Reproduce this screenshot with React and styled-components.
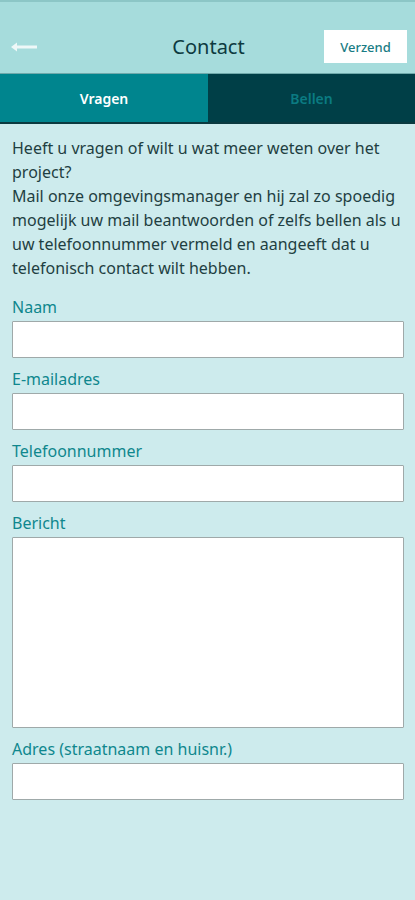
import React from "react";
import styled, { createGlobalStyle } from "styled-components";

const Global = createGlobalStyle`
  html, body { margin: 0; padding: 0; background: #cdebed; }
  body { font-family: "Noto Sans", "Open Sans", sans-serif; }
  * { box-sizing: border-box; }
`;

const Page = styled.div`
  width: 415px;
  min-height: 900px;
  background: #cdebed;
  display: flex;
  flex-direction: column;
`;

const Header = styled.header`
  height: 74px;
  background: #a6dcdc;
  border-top: 2px solid #8cc6c6;
  border-bottom: 1px solid #6fa9ab;
  display: grid;
  grid-template-columns: 1fr auto 1fr;
  align-items: center;
  padding: 24px 8px 6px 10px;
`;

const Back = styled.button`
  background: none;
  border: none;
  padding: 0;
  width: 28px;
  height: 20px;
  display: flex;
  align-items: center;
  justify-self: start;
`;

const Title = styled.h1`
  margin: 0;
  font-size: 20px;
  font-weight: 400;
  color: #0d3a40;
  letter-spacing: 0;
`;

const SendButton = styled.button`
  justify-self: end;
  width: 83px;
  height: 33px;
  background: #fff;
  border: none;
  color: #197c84;
  font-family: inherit;
  font-size: 13px;
  font-weight: 500;
`;

const Tabs = styled.nav`
  display: grid;
  grid-template-columns: 208px 207px;
  height: 50px;
  border-bottom: 2px solid #0b3a40;
`;

const Tab = styled.div`
  display: flex;
  align-items: center;
  justify-content: center;
  font-size: 14px;
  font-weight: 600;
  background: ${(p) => (p.$active ? "#00858e" : "#003f47")};
  color: ${(p) => (p.$active ? "#ffffff" : "#0b7b82")};
`;

const Content = styled.main`
  padding: 12px 11px 0 12px;
  display: flex;
  flex-direction: column;
`;

const Intro = styled.p`
  margin: 0 0 15px;
  font-size: 16px;
  line-height: 24px;
  color: #1f3f42;
`;

const Field = styled.label`
  display: flex;
  flex-direction: column;
  margin-bottom: 9px;
`;

const Label = styled.span`
  font-size: 16px;
  line-height: 24px;
  color: #0f878d;
  margin-bottom: 2px;
`;

const Input = styled.input`
  width: 392px;
  height: 37px;
  background: #fff;
  border: 1.5px solid #9fa9a9;
  border-radius: 1px;
  font-family: inherit;
  font-size: 15px;
  padding: 0 8px;
`;

const TextArea = styled.textarea`
  width: 392px;
  height: 191px;
  background: #fff;
  border: 1.5px solid #9fa9a9;
  border-radius: 1px;
  resize: none;
  font-family: inherit;
  font-size: 15px;
  padding: 6px 8px;
`;

export default function App() {
  return (
    <Page>
      <Global />
      <Header>
        <Back aria-label="Terug">
          <svg width="28" height="10" viewBox="0 0 28 10">
            <path d="M27 5H4" stroke="#eef8f8" strokeWidth="3" />
            <path d="M7 0.5L1 5l6 4.5z" fill="#eef8f8" />
          </svg>
        </Back>
        <Title>Contact</Title>
        <SendButton>Verzend</SendButton>
      </Header>
      <Tabs>
        <Tab $active>Vragen</Tab>
        <Tab>Bellen</Tab>
      </Tabs>
      <Content>
        <Intro>
          Heeft u vragen of wilt u wat meer weten over het project?
          <br />
          Mail onze omgevingsmanager en hij zal zo spoedig mogelijk uw mail
          beantwoorden of zelfs bellen als u uw telefoonnummer vermeld en
          aangeeft dat u telefonisch contact wilt hebben.
        </Intro>
        <Field>
          <Label>Naam</Label>
          <Input type="text" />
        </Field>
        <Field>
          <Label>E-mailadres</Label>
          <Input type="email" />
        </Field>
        <Field>
          <Label>Telefoonnummer</Label>
          <Input type="tel" />
        </Field>
        <Field>
          <Label>Bericht</Label>
          <TextArea />
        </Field>
        <Field>
          <Label>Adres (straatnaam en huisnr.)</Label>
          <Input type="text" />
        </Field>
      </Content>
    </Page>
  );
}
